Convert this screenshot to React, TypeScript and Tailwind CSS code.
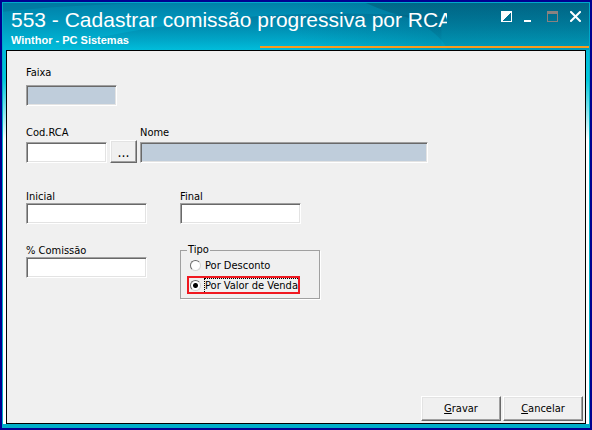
import type { ReactNode } from "react";

function Field({
  id,
  label,
  className = "",
  labelClassName = "",
  disabled = false,
}: {
  id: string;
  label: string;
  className?: string;
  labelClassName?: string;
  disabled?: boolean;
}) {
  return (
    <div className={className}>
      <label htmlFor={id} className={`block leading-3 whitespace-nowrap ${labelClassName}`}>
        {label}
      </label>
      <input
        id={id}
        type="text"
        disabled={disabled}
        className={`block h-[21px] w-full rounded-none border border-t-[#a0a0a0] border-r-white border-b-white border-l-[#a0a0a0] px-1 shadow-[inset_1px_1px_0_#696969,inset_-1px_-1px_0_#e3e3e3] outline-none ${
          disabled ? "bg-[#bfcddb]" : "bg-white"
        }`}
      />
    </div>
  );
}

function PushButton({
  children,
  label,
  className = "",
}: {
  children: ReactNode;
  label?: string;
  className?: string;
}) {
  return (
    <button
      type="button"
      aria-label={label}
      className={`border border-t-white border-r-[#696969] border-b-[#696969] border-l-white bg-[#f0f0f0] shadow-[inset_-1px_-1px_0_#a0a0a0,inset_1px_1px_0_#e3e3e3] ${className}`}
    >
      {children}
    </button>
  );
}

const radioClass =
  "size-[11px] shrink-0 appearance-none rounded-full border border-t-[#696969] border-r-[#d4d4d4] border-b-[#d4d4d4] border-l-[#696969] bg-white checked:bg-[radial-gradient(circle,#000_0_2px,#fff_3px)]";

export default function App() {
  return (
    <div className="flex h-screen flex-col border-2 border-[#000090] bg-[#00aec8] font-['DejaVu_Sans_Condensed','DejaVu_Sans',sans-serif] text-[11px] leading-[14px] text-black">
      <header className="relative flex h-12 shrink-0 items-start overflow-hidden border-x border-t border-[#00a9cc] pl-2 text-white">
        <svg className="absolute inset-0 size-full" viewBox="0 0 588 48" preserveAspectRatio="none" aria-hidden="true">
          <defs>
            <linearGradient id="sky" x1="0" y1="0" x2="0" y2="1">
              <stop offset="0" stopColor="#0080a8" />
              <stop offset="0.5" stopColor="#009cc0" />
              <stop offset="1" stopColor="#00bddb" />
            </linearGradient>
            <linearGradient id="shade" x1="0" y1="0" x2="1" y2="0">
              <stop offset="0.5" stopColor="#005f7b" stopOpacity="0" />
              <stop offset="0.75" stopColor="#005f7b" stopOpacity="0.3" />
              <stop offset="1" stopColor="#00607a" stopOpacity="0.3" />
            </linearGradient>
            <linearGradient id="wave" x1="0" y1="0" x2="0" y2="1">
              <stop offset="0" stopColor="#006288" stopOpacity="0.4" />
              <stop offset="1" stopColor="#006288" stopOpacity="0" />
            </linearGradient>
            <linearGradient id="corner" x1="0" y1="0" x2="0" y2="1">
              <stop offset="0" stopColor="#005470" stopOpacity="0.5" />
              <stop offset="1" stopColor="#005470" stopOpacity="0.05" />
            </linearGradient>
          </defs>
          <rect width="588" height="48" fill="url(#sky)" />
          <path d="M0 0H150Q60 2 0 9Z" fill="#006e96" opacity="0.45" />
          <path d="M50 46Q150 20 260 13Q350 8 440 14V48H50Z" fill="url(#wave)" />
          <rect width="588" height="48" fill="url(#shade)" />
          <path d="M364 0Q386 10 410 16Q440 32 446 48H540Q530 18 498 0Z" fill="url(#corner)" />
          <path d="M498 0Q530 18 540 48H588V0Z" fill="url(#corner)" />
        </svg>
        <div className="relative w-[436px] font-['Liberation_Sans',Arial,sans-serif]">
          <h1 className="overflow-hidden text-[21px] leading-[33px] whitespace-nowrap">
            553 - Cadastrar comissão progressiva por RCA
          </h1>
          <p className="text-[11px] leading-[9px] font-bold">Winthor - PC Sistemas</p>
        </div>
        <div className="relative mt-2 mr-2 ml-auto flex gap-3">
          <button type="button" aria-label="Recolher">
            <svg width="11" height="11" shapeRendering="crispEdges">
              <path d="M0 0H11V11H0ZM10 1L1 10H10Z" fill="white" fillRule="evenodd" />
            </svg>
          </button>
          <button type="button" aria-label="Minimizar">
            <svg width="11" height="11" shapeRendering="crispEdges">
              <path d="M0 9H7V11H0Z" fill="white" />
            </svg>
          </button>
          <button type="button" aria-label="Maximizar" disabled>
            <svg width="11" height="11" shapeRendering="crispEdges">
              <path d="M0 0H11V11H0ZM1 3V10H10V3Z" fill="#8a8280" fillRule="evenodd" />
            </svg>
          </button>
          <button type="button" aria-label="Fechar">
            <svg width="11" height="11">
              <path d="M1 1L10 10M10 1L1 10" stroke="white" strokeWidth="2" strokeLinecap="square" />
            </svg>
          </button>
        </div>
        <div className="absolute right-0 bottom-[2px] left-[257px] h-[2px] bg-[#f99b1c]" />
      </header>

      <div className="flex min-h-0 flex-1 border-x border-b-4 border-[#00aec8] bg-[linear-gradient(#00b8d8,#00c8dc_30px,#fff_90px)] px-[3px]">
        <form className="flex flex-1 flex-col border border-black bg-[#f0f0f0]">
          <div className="flex-1 pt-4 pl-[19px]">
            <Field id="faixa" label="Faixa" className="w-[91px]" labelClassName="pb-[6px]" disabled />

            <div className="mt-[21px] mr-[157px] flex items-end">
              <Field id="cod" label="Cod.RCA" className="w-[81px]" labelClassName="pb-[3px]" />
              <PushButton label="Procurar RCA" className="mx-[3px] h-[23px] w-[27px] text-sm leading-[14px]">
                ...
              </PushButton>
              <Field id="nome" label="Nome" className="flex-1" labelClassName="pb-[3px]" disabled />
            </div>

            <div className="mt-7 flex gap-[33px]">
              <Field id="inicial" label="Inicial" className="w-[121px]" />
              <Field id="final" label="Final" className="w-[121px]" />
            </div>

            <div className="mt-[21px] flex items-start gap-[33px]">
              <Field id="comissao" label="% Comissão" className="w-[121px]" />
              <fieldset className="h-[54px] w-[140px] border border-[#a0a0a0] px-[6px] shadow-[1px_1px_0_#fff]">
                <legend className="px-[1px] leading-[10px]">Tipo</legend>
                <label className="flex h-[21px] items-center gap-1 pl-[3px]">
                  <input type="radio" name="tipo" className={radioClass} />
                  Por Desconto
                </label>
                <label className="flex h-[18px] w-[113px] items-center gap-[3px] border-2 border-[#f01820] pl-[1px] whitespace-nowrap">
                  <input type="radio" name="tipo" defaultChecked className={radioClass} />
                  <span className="min-w-0 flex-1 border-t border-l border-dotted border-black leading-[13px]">
                    Por Valor de Venda
                  </span>
                </label>
              </fieldset>
            </div>
          </div>
          <div className="flex justify-end gap-[2px] pr-[2px] pb-[2px]">
            <PushButton className="h-[25px] w-20">
              <u>G</u>ravar
            </PushButton>
            <PushButton className="h-[25px] w-20">
              <u>C</u>ancelar
            </PushButton>
          </div>
        </form>
      </div>
    </div>
  );
}
